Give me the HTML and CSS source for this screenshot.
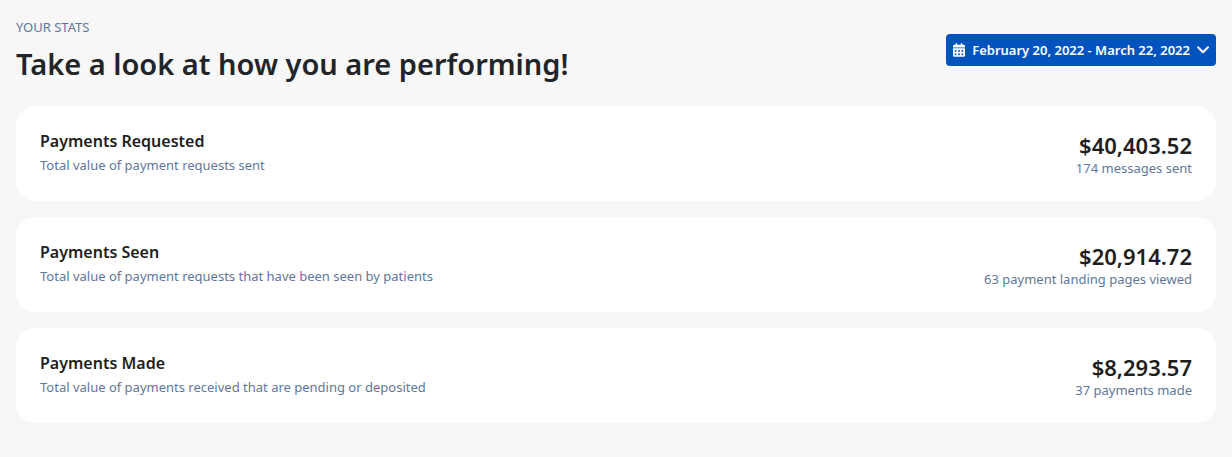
FILE: index.html
```html
<!DOCTYPE html>
<html lang="en">
<head>
  <meta charset="UTF-8" />
  <meta name="viewport" content="width=device-width, initial-scale=1.0"/>
  <title>Your Stats</title>
  <link rel="stylesheet" href="styles.css">
</head>
<body>
  <header class="header">
    <div class="heading">
      <p class="eyebrow">YOUR STATS</p>
      <h1>Take a look at how you are performing!</h1>
    </div>
    <button class="date-range" type="button">
      <svg class="calendar" viewBox="0 0 448 512" aria-hidden="true">
        <path fill="currentColor" d="M0 464c0 26.500 21.500 48 48 48h352c26.500 0 48-21.500 48-48V192H0v272zm320-196c0-6.600 5.400-12 12-12h40c6.600 0 12 5.400 12 12v40c0 6.600-5.400 12-12 12h-40c-6.600 0-12-5.400-12-12v-40zm0 128c0-6.600 5.400-12 12-12h40c6.600 0 12 5.400 12 12v40c0 6.600-5.400 12-12 12h-40c-6.600 0-12-5.400-12-12v-40zM192 268c0-6.600 5.400-12 12-12h40c6.600 0 12 5.400 12 12v40c0 6.600-5.400 12-12 12h-40c-6.600 0-12-5.400-12-12v-40zm0 128c0-6.600 5.400-12 12-12h40c6.600 0 12 5.400 12 12v40c0 6.600-5.400 12-12 12h-40c-6.600 0-12-5.400-12-12v-40zM64 268c0-6.600 5.400-12 12-12h40c6.600 0 12 5.400 12 12v40c0 6.600-5.400 12-12 12H76c-6.600 0-12-5.400-12-12v-40zm0 128c0-6.600 5.400-12 12-12h40c6.600 0 12 5.400 12 12v40c0 6.600-5.400 12-12 12H76c-6.600 0-12-5.400-12-12v-40zM400 64h-48V16c0-8.800-7.200-16-16-16h-32c-8.800 0-16 7.200-16 16v48H160V16c0-8.800-7.200-16-16-16h-32c-8.800 0-16 7.200-16 16v48H48C21.500 64 0 85.500 0 112v48h448v-48c0-26.500-21.500-48-48-48z"/>
      </svg>
      <span>February 20, 2022 - March 22, 2022</span>
      <svg class="chevron" viewBox="0 0 12 8" aria-hidden="true">
        <path d="M1 1.200l5 5 5-5" fill="none" stroke="currentColor" stroke-width="2" stroke-linecap="round" stroke-linejoin="round"/>
      </svg>
    </button>
  </header>

  <main class="stats">
    <section class="stat">
      <div class="info">
        <h2>Payments Requested</h2>
        <p>Total value of payment requests sent</p>
      </div>
      <div class="total">
        <strong>$40,403.52</strong>
        <p>174 messages sent</p>
      </div>
    </section>
    <section class="stat">
      <div class="info">
        <h2>Payments Seen</h2>
        <p>Total value of payment requests that have been seen by patients</p>
      </div>
      <div class="total">
        <strong>$20,914.72</strong>
        <p>63 payment landing pages viewed</p>
      </div>
    </section>
    <section class="stat">
      <div class="info">
        <h2>Payments Made</h2>
        <p>Total value of payments received that are pending or deposited</p>
      </div>
      <div class="total">
        <strong>$8,293.57</strong>
        <p>37 payments made</p>
      </div>
    </section>
  </main>
</body>
</html>
```
FILE: styles.css
```css
body {
  font-family: 'Noto Sans', sans-serif;
  font-size: 13px;
  background: #f7f7f7;
  color: #1e1e1e;
  margin: 0;
  padding: 16px;
}
h1, h2, p {
  margin: 0;
}
.header {
  display: flex;
  justify-content: space-between;
  align-items: flex-start;
  margin-bottom: 16px;
}
.eyebrow {
  color: #627798;
  line-height: 22px;
}
h1 {
  color: #212529;
  font-size: 29px;
  font-weight: 600;
  line-height: 52px;
}
.date-range {
  display: flex;
  align-items: center;
  gap: 7px;
  height: 32px;
  margin-top: 18px;
  padding: 0 7px;
  background: #0052bd;
  color: white;
  border: none;
  border-radius: 4px;
  font-family: inherit;
  font-size: 13px;
  font-weight: 600;
  white-space: nowrap;
  cursor: pointer;
}
.calendar {
  width: 12px;
  height: 14px;
}
.chevron {
  width: 12px;
  height: 8px;
}
.stats {
  display: grid;
  gap: 16px;
}
.stat {
  display: flex;
  justify-content: space-between;
  align-items: center;
  background: white;
  padding: 24px;
  border-radius: 20px;
}
.stat p {
  color: #627798;
}
.info h2 {
  font-size: 16px;
  font-weight: 600;
  line-height: 23px;
}
.info p {
  line-height: 24px;
}
.total {
  text-align: right;
}
.total strong {
  display: block;
  font-size: 22px;
  font-weight: 600;
  line-height: 30px;
}
.total p {
  line-height: 17px;
}
```
